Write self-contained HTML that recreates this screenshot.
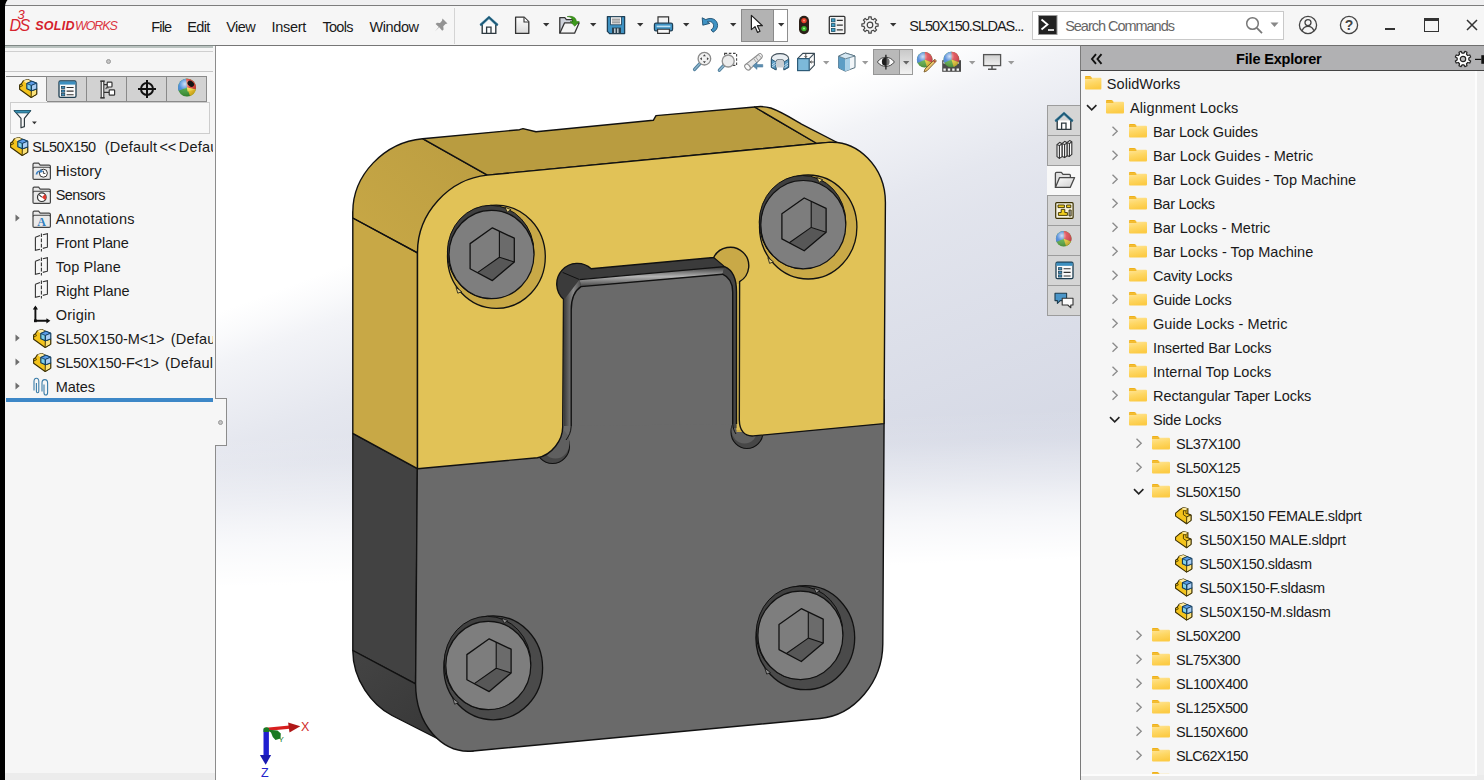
<!DOCTYPE html>
<html><head><meta charset="utf-8"><title>SOLIDWORKS</title>
<style>
*{box-sizing:border-box;margin:0;padding:0}
html,body{width:1484px;height:780px;overflow:hidden;background:#f5f5f5;font-family:"Liberation Sans",sans-serif;font-size:14.5px;color:#1a1a1a}
#app{position:relative;width:1484px;height:780px;overflow:hidden;background:#f5f5f5}
.abs{position:absolute}
.fn,.fm{font:14.5px "Liberation Sans",sans-serif;white-space:pre}
.fb{font:bold 14.5px "Liberation Sans",sans-serif;white-space:pre}
.fsb{font:italic bold 12.5px "Liberation Sans",sans-serif;white-space:pre}
.fsw{font:italic 12.5px "Liberation Sans",sans-serif;white-space:pre}
.t{position:absolute;white-space:pre;line-height:18px;height:18px}
svg{position:absolute;overflow:visible}
</style></head><body><div id="app">
<svg width="0" height="0" style="position:absolute"><defs>
<linearGradient id="fg" x1="0" y1="0" x2="0.300" y2="1"><stop offset="0" stop-color="#ffe59a"/><stop offset="0.500" stop-color="#fed867"/><stop offset="1" stop-color="#fccb45"/></linearGradient>
<g id="ic_folder"><path d="M0 0.900Q0 0 0.900 0H5.400Q6 0 6.400 0.500L7.600 2H0Z" fill="#efb11a"/><path d="M0 1.800H17Q18 1.800 18 2.800V12.600Q18 13.500 17 13.500H1Q0 13.500 0 12.600Z" fill="url(#fg)"/><path d="M0 1.800H7.400V3H0Z" fill="#f3bb2c"/></g>
<g id="ic_gear"><path d="M15.06 7.67L17.11 7.78L17.11 10.22L15.06 10.33L14.22 12.34L15.60 13.87L13.87 15.60L12.34 14.22L10.33 15.06L10.22 17.11L7.78 17.11L7.67 15.06L5.66 14.22L4.13 15.60L2.40 13.87L3.78 12.34L2.94 10.33L0.89 10.22L0.89 7.78L2.94 7.67L3.78 5.66L2.40 4.13L4.13 2.40L5.66 3.78L7.67 2.94L7.78 0.89L10.22 0.89L10.33 2.94L12.34 3.78L13.87 2.40L15.60 4.13L14.22 5.66Z" fill="none" stroke="#444" stroke-width="1.2" stroke-linejoin="round"/><circle cx="9" cy="9" r="2.800" fill="none" stroke="#444" stroke-width="1.200"/></g>
<g id="ic_ball"><circle cx="9.700" cy="8.800" r="7.800" fill="#5aa845"/><path d="M9.700 8.800L9.700 1A7.800 7.800 0 0 1 17 11.600Z" fill="#dd4a52"/><path d="M9.700 8.800L2.600 12A7.800 7.800 0 0 1 9.700 1Z" fill="#4a86d8"/><path d="M9.700 8.800L17 11.600A7.800 7.800 0 0 1 12 16.300Z" fill="#e8c83a"/><circle cx="9.700" cy="8.800" r="7.800" fill="url(#gball)"/></g>
<radialGradient id="gball" cx="0.380" cy="0.300" r="0.700"><stop offset="0" stop-color="#fff" stop-opacity="0.750"/><stop offset="0.450" stop-color="#fff" stop-opacity="0.100"/><stop offset="1" stop-color="#000" stop-opacity="0.180"/></radialGradient>
<g id="ic_asm"><path d="M0.600 5.800L2.400 4.600L4.200 1.700L8.600 0.500L12.400 2.400L17.200 9.600V14.800L11.800 18L0.600 10Z" fill="#f4c41c" stroke="#3a2e00" stroke-width="1.100" stroke-linejoin="round"/><path d="M4.200 1.700L8.600 0.500L12.400 2.400L7.600 4.600Z" fill="#fde9a0"/><path d="M12 11.400L17.200 9.600V14.800L11.800 18Z" fill="#fbe27a" stroke="#3a2e00" stroke-width="0.900" stroke-linejoin="round"/><path d="M2.400 4.600L3.400 6.600L0.900 7.600" fill="none" stroke="#3a2e00" stroke-width="0.800"/><path d="M7.600 4.400L12.500 2.200L17.200 4.100V9.600L12 11.500L7.600 9.400Z" fill="#7fd0ea" stroke="#0f3a5a" stroke-width="1.100" stroke-linejoin="round"/><path d="M7.600 4.400L12.500 2.200L17.200 4.100L12 6.300Z" fill="#5b9be6" stroke="#0f3a5a" stroke-width="0.800" stroke-linejoin="round"/><path d="M12 6.300L17.200 4.100V9.600L12 11.500Z" fill="#a9cdf3" stroke="#0f3a5a" stroke-width="0.800" stroke-linejoin="round"/><path d="M12 6.300V11.500" stroke="#0f3a5a" stroke-width="1.100"/></g>
<g id="ic_prt"><path d="M0.600 6.800L4.600 3.400L8.800 1L13.200 2.200V7.400L16.400 8.800V14.200L11.800 17.600L0.600 9.800Z" fill="#f4c41c" stroke="#3a2e00" stroke-width="1.100" stroke-linejoin="round"/><path d="M8.800 1L13.200 2.200L11 4.200L6.800 2.600Z" fill="#fde9a0"/><path d="M8.600 4.200V8.400L12 10.600L16.400 8.800" fill="none" stroke="#3a2e00" stroke-width="0.900"/><path d="M8.600 4.200L11.200 4.400L13.200 2.200" fill="none" stroke="#3a2e00" stroke-width="0.800"/><path d="M12 10.600L16.400 8.800V14.200L11.800 17.600Z" fill="#fbe27a" stroke="#3a2e00" stroke-width="0.900" stroke-linejoin="round"/><path d="M11.200 4.400V7.200L13.200 7.400" fill="none" stroke="#3a2e00" stroke-width="0.800"/></g>
<g id="ic_tri"><path d="M0.500 0.500L4.700 4L0.500 7.500Z" fill="#6e6e6e"/></g>
<g id="ic_plane"><path d="M1.400 4.200L6 2.600M8.800 1.800L13.400 0.800V14.200L8.800 15.400M6 16.200L1.400 17.400V4.200" fill="none" stroke="#333" stroke-width="1.100"/><path d="M7.400 0.400V18.600" stroke="#333" stroke-width="1.100" stroke-dasharray="3.600 1.600"/></g>
<g id="ic_tfolder"><path d="M1 16.200V2.400Q1 1.200 2.200 1.200H6.600L8.200 3.200H17Q18.400 3.200 18.400 4.600V16.200Q18.400 17.400 17.200 17.400H2.200Q1 17.400 1 16.200Z" fill="#eaeaea" stroke="#444" stroke-width="1.200" stroke-linejoin="round"/><path d="M1.200 6.400Q1.200 5.200 2.400 5.200H17.200Q18.200 5.200 18.200 6.400" fill="none" stroke="#444" stroke-width="1.100"/></g>
</defs></svg>
<!-- top strip + title bar -->
<div class="abs" style="left:0;top:0;width:1484px;height:5px;background:#f0f0f1"></div>
<div class="abs" style="left:5px;top:5px;width:1479px;height:1px;background:#7d7d7d"></div>
<div class="abs" id="titlebar" style="left:5px;top:6px;width:1479px;height:39px;background:#f6f6f6"></div>
<!-- logo -->
<div class="t" style="left:17.500px;top:9px;font:italic 13px 'Liberation Sans',sans-serif;color:#d6232f;line-height:12px;height:12px">3</div>
<div class="t" style="left:9.500px;top:17.500px;font:italic 16px 'Liberation Sans',sans-serif;color:#d6232f;line-height:16px;height:16px;letter-spacing:-1.600px">DS</div>
<div class="t" style="left:35.200px;top:16.500px;color:#d4202c;line-height:16px;height:16px"><span class="fsb" style="letter-spacing:0.279px">SOLID</span></div>
<div class="t" style="left:75px;top:16.500px;color:#dc3540;line-height:16px;height:16px"><span class="fsw" style="letter-spacing:-1.107px">WORKS</span></div>
<!-- menus -->
<div class="t" style="left:151.3px;top:18px"><span class="fm" style="letter-spacing:-0.869px">File</span></div>
<div class="t" style="left:187.3px;top:18px"><span class="fm" style="letter-spacing:-0.650px">Edit</span></div>
<div class="t" style="left:226.2px;top:18px"><span class="fm" style="letter-spacing:-0.568px">View</span></div>
<div class="t" style="left:271.6px;top:18px"><span class="fm" style="letter-spacing:-0.311px">Insert</span></div>
<div class="t" style="left:322.4px;top:18px"><span class="fm" style="letter-spacing:-0.712px">Tools</span></div>
<div class="t" style="left:369.4px;top:18px"><span class="fm" style="letter-spacing:-0.380px">Window</span></div>
<!-- pin -->
<svg style="left:433px;top:17px" width="16" height="16" viewBox="0 0 16 16"><path d="M9.5 1.5l5 5-2 .6-2.2 2.2.3 3.2-1.4 1.2-3-3.4-4.4 4.2 4-4.6L2.6 7l1.4-1.2 3 .2 2-2.2z" fill="#939393"/></svg>
<div class="abs" style="left:454px;top:8px;width:1px;height:36px;background:#d4d4d4"></div>
<!-- home -->
<svg style="left:479px;top:15px" width="20" height="20" viewBox="0 0 20 20"><path d="M3.2 9.5V18.4H16.8V9.5" fill="#fdfdfd" stroke="#2f3a40" stroke-width="1.4"/><path d="M7.6 18.4V12.2H12V18.4" fill="none" stroke="#2f3a40" stroke-width="1.3"/><path d="M1.4 10.2L10 2.4L18.6 10.2" fill="none" stroke="#2a6f8f" stroke-width="2.6" stroke-linejoin="miter"/><path d="M1.2 10.6L10 2.2L18.8 10.6" fill="none" stroke="#173d50" stroke-width="0.6"/></svg>
<!-- new -->
<svg style="left:514px;top:15px" width="17" height="20" viewBox="0 0 17 20"><defs><linearGradient id="gnew" x1="0" y1="0" x2="0" y2="1"><stop offset="0" stop-color="#fff"/><stop offset="1" stop-color="#d9d9d9"/></linearGradient></defs><path d="M1.6 2.2h8.6l4.6 4.6v11.6H1.6z" fill="url(#gnew)" stroke="#333" stroke-width="1.3" stroke-linejoin="round"/><path d="M10 2.4v4.6h4.6" fill="#fff" stroke="#333" stroke-width="1.1"/></svg>
<svg style="left:542.5px;top:23px" width="7" height="4"><path d="M0 0h6.4l-3.2 3.4z" fill="#333"/></svg>
<!-- open -->
<svg style="left:558px;top:14px" width="23" height="21" viewBox="0 0 23 21"><path d="M1.8 19.2V3.6h5l1.6 2h6.2v3" fill="#cfd3dc" stroke="#333" stroke-width="1.3" stroke-linejoin="round"/><path d="M1.8 19.2L6.6 8.8h14.6l-4.6 10.4z" fill="#f4f4f4" stroke="#333" stroke-width="1.3" stroke-linejoin="round"/><path d="M9.2 2.6c4 .2 5.4 2.4 5.6 5h-2.6l4.6 4.6 4.4-4.6h-2.8c-.2-3.6-3.2-6.200-9.200-5z" fill="#3d9a1c" stroke="#2b7410" stroke-width="0.6"/></svg>
<svg style="left:589.8px;top:23px" width="7" height="4"><path d="M0 0h6.4l-3.2 3.4z" fill="#333"/></svg>
<!-- save -->
<svg style="left:606px;top:15px" width="20" height="20" viewBox="0 0 20 20"><path d="M1.4 1.6h17.2v17h-15l-2.200-2.200z" fill="#3f93c4" stroke="#1f3f55" stroke-width="1.3" stroke-linejoin="round"/><rect x="4.600" y="1.800" width="10.800" height="8" fill="#f2f2f2" stroke="#1f3f55" stroke-width="0.8"/><path d="M6 4.200h8M6 6h8M6 7.800h8" stroke="#666" stroke-width="0.8"/><rect x="6" y="12.600" width="9" height="6" fill="#2a3f4c"/><rect x="8" y="13.400" width="1.600" height="4.600" fill="#b8c4cc"/><rect x="11" y="13.400" width="1.600" height="4.600" fill="#b8c4cc"/></svg>
<svg style="left:636.6px;top:23px" width="7" height="4"><path d="M0 0h6.4l-3.2 3.4z" fill="#333"/></svg>
<!-- print -->
<svg style="left:653px;top:15px" width="21" height="20" viewBox="0 0 21 20"><path d="M5 8.600V1.800h10.600v6.800" fill="#f4f4f4" stroke="#333" stroke-width="1.200"/><rect x="1.400" y="8.200" width="18.200" height="7.600" rx="1.600" fill="#3f93c4" stroke="#1f3f55" stroke-width="1.200"/><rect x="3.600" y="10.600" width="13.800" height="1.600" fill="#bfe0f2"/><path d="M4.600 14.200v4.200h11.800v-4.200z" fill="#f8f8f8" stroke="#333" stroke-width="1.100"/></svg>
<svg style="left:683.4px;top:23px" width="7" height="4"><path d="M0 0h6.4l-3.2 3.4z" fill="#333"/></svg>
<!-- undo -->
<svg style="left:700px;top:15px" width="20" height="20" viewBox="0 0 20 20"><path d="M2.200 2.800l.6 7.400 7-1.800-2.600-1.600c3-1.200 6.400.8 6.400 4 0 1.800-1 3.200-2.600 4l2 2.400c2.800-1.400 4.600-3.800 4.600-6.800 0-5.600-6-8.800-11.800-5.800z" fill="#3f93c4" stroke="#1f4f70" stroke-width="0.900" stroke-linejoin="round"/></svg>
<svg style="left:730.400px;top:23px" width="7" height="4"><path d="M0 0h6.4l-3.2 3.4z" fill="#333"/></svg>
<!-- select -->
<div class="abs" style="left:741px;top:9px;width:47px;height:33px;background:#fff;border:1px solid #8e8e8e"></div>
<div class="abs" style="left:741px;top:9px;width:33px;height:33px;background:#b3b3b3;border:1px solid #8a8a8a"></div>
<svg style="left:750px;top:14px" width="15" height="20" viewBox="0 0 15 20"><path d="M1.400 1.400V15.600l3.600-3 2.600 5.800 2.400-1.100-2.600-5.600h5z" fill="#fff" stroke="#222" stroke-width="1.200" stroke-linejoin="round"/></svg>
<svg style="left:777.700px;top:23px" width="7" height="4"><path d="M0 0h6.4l-3.2 3.4z" fill="#333"/></svg>
<!-- traffic light -->
<svg style="left:798px;top:15px" width="12" height="20" viewBox="0 0 12 20"><rect x="1" y="0.800" width="10" height="18.400" rx="5" fill="#2b2018"/><circle cx="6" cy="5.600" r="2.700" fill="#e8402a"/><circle cx="6" cy="5.600" r="1" fill="#ff9a80"/><circle cx="6" cy="13.600" r="2.700" fill="#36b428"/><circle cx="6" cy="13.600" r="1" fill="#a8f59a"/></svg>
<!-- options list -->
<svg style="left:828px;top:15px" width="18" height="20" viewBox="0 0 18 20"><rect x="1.300" y="1.300" width="15.600" height="17.400" rx="1" fill="#f4f4f4" stroke="#333" stroke-width="1.300"/><rect x="3.400" y="3.800" width="3.600" height="3" fill="#3fa0c8" stroke="#1d4f66" stroke-width="0.800"/><rect x="3.400" y="8.600" width="3.600" height="3" fill="#3fa0c8" stroke="#1d4f66" stroke-width="0.800"/><rect x="3.400" y="13.400" width="3.600" height="3" fill="#3fa0c8" stroke="#1d4f66" stroke-width="0.800"/><path d="M8.800 5.300h6M8.800 10.100h6M8.800 14.900h6" stroke="#333" stroke-width="1.200"/></svg>
<!-- gear -->
<svg style="left:861px;top:16px" width="18" height="18" viewBox="0 0 18 18"><use href="#ic_gear"/></svg>
<svg style="left:890.400px;top:23px" width="7" height="4"><path d="M0 0h6.4l-3.2 3.4z" fill="#333"/></svg>

<!-- doc title -->
<div class="t" style="left:909.3px;top:16.6px"><span class="fm" style="letter-spacing:-1.024px">SL50X150.SLDAS...</span></div>
<!-- search -->
<div class="abs" style="left:1032px;top:11px;width:252px;height:29px;background:#fff;border:1px solid #c9c9c9"></div>
<svg style="left:1038px;top:15px" width="20" height="20" viewBox="0 0 20 20"><rect x="0.5" y="0.5" width="18.5" height="19" fill="#222" stroke="#999"/><path d="M3.5 4.5l6 5-6 5" fill="none" stroke="#fff" stroke-width="1.8"/><path d="M10 15h6" stroke="#fff" stroke-width="1.6"/></svg>
<div class="t" style="left:1065.2px;top:16.6px;color:#666"><span class="fm" style="letter-spacing:-1.027px">Search Commands</span></div>
<svg style="left:1245px;top:16px" width="20" height="20" viewBox="0 0 20 20"><circle cx="7.5" cy="7.5" r="5.8" fill="none" stroke="#777" stroke-width="1.5"/><path d="M11.8 11.8l5.2 5.4" stroke="#777" stroke-width="1.8"/></svg>
<svg style="left:1270px;top:22px" width="10" height="6"><path d="M0.5 0.5h8l-4 4.5z" fill="#888"/></svg>
<!-- user / help / window buttons -->
<svg style="left:1298px;top:15px" width="20" height="20" viewBox="0 0 20 20"><circle cx="10" cy="10" r="8.6" fill="none" stroke="#444" stroke-width="1.3"/><circle cx="10" cy="7.6" r="3" fill="none" stroke="#444" stroke-width="1.3"/><path d="M4.2 15.8c1-3.4 3.4-4.4 5.8-4.4s4.8 1 5.8 4.4" fill="none" stroke="#444" stroke-width="1.3"/></svg>
<svg style="left:1339px;top:15px" width="20" height="20" viewBox="0 0 20 20"><circle cx="10" cy="10" r="8.6" fill="none" stroke="#444" stroke-width="1.3"/><text x="10" y="15" text-anchor="middle" font-family="Liberation Sans, sans-serif" font-weight="bold" font-size="14" fill="#444">?</text></svg>
<div class="abs" style="left:1385px;top:28px;width:10px;height:2px;background:#333"></div>
<div class="abs" style="left:1424px;top:18px;width:15px;height:14px;border:1px solid #333;border-top-width:3px"></div>
<svg style="left:1466px;top:19px" width="12" height="12"><path d="M1 1l10 10M11 1L1 11" stroke="#333" stroke-width="1.5"/></svg>
<!-- title bottom borders -->
<div class="abs" style="left:5px;top:45px;width:210px;height:1px;background:#808886"></div>
<div class="abs" style="left:215px;top:45px;width:1269px;height:1px;background:#767676"></div>
<!-- LEFT PANEL -->
<div class="abs" id="leftpanel" style="left:5px;top:46px;width:210px;height:734px;background:#f6f6f6"></div>
<div class="abs" style="left:5px;top:46px;width:208px;height:2px;background:#bac3c0"></div>
<div class="abs" style="left:5px;top:51px;width:208px;height:1px;background:#cfcfcf"></div>
<div class="abs" style="left:106px;top:58.5px;width:5px;height:5px;border-radius:50%;background:#c4c4c4;border:1px solid #999"></div>
<div class="abs" style="left:5px;top:71px;width:208px;height:1px;background:#c6c6c6"></div>
<!-- tabs -->
<div class="abs" style="left:6px;top:76px;width:41px;height:1px;background:#858585"></div>
<div class="abs" style="left:46px;top:76px;width:161px;height:26px;background:#d2d2d2;border:1px solid #8a8a8a"></div>
<div class="abs" style="left:86px;top:76px;width:1px;height:26px;background:#8a8a8a"></div>
<div class="abs" style="left:126px;top:76px;width:1px;height:26px;background:#8a8a8a"></div>
<div class="abs" style="left:166px;top:76px;width:1px;height:26px;background:#8a8a8a"></div>
<div class="abs" style="left:5px;top:101px;width:42px;height:1px;background:#f6f6f6"></div>
<svg style="left:18.500px;top:79px" width="18.500" height="18.500" viewBox="0 0 18 18"><use href="#ic_asm"/></svg>
<svg style="left:57.500px;top:79.500px" width="19" height="18" viewBox="0 0 19 18"><rect x="1" y="1" width="17" height="16.400" rx="1.400" fill="#fafafa" stroke="#1d3d50" stroke-width="1.300"/><path d="M1.400 1.400h16.200v3.200H1.400z" fill="#3c8fc0"/><rect x="3.400" y="6.400" width="3.400" height="2.200" fill="#3c8fc0" stroke="#1d3d50" stroke-width="0.700"/><rect x="3.400" y="10" width="3.400" height="2.200" fill="#3c8fc0" stroke="#1d3d50" stroke-width="0.700"/><rect x="3.400" y="13.600" width="3.400" height="2.200" fill="#3c8fc0" stroke="#1d3d50" stroke-width="0.700"/><path d="M8.600 7.500h7M8.600 11.100h7M8.600 14.700h7" stroke="#333" stroke-width="1.100"/></svg>
<svg style="left:98.500px;top:79.500px" width="17" height="19" viewBox="0 0 17 19"><path d="M2.200 1.200h2.600v16.600H2.200z" fill="#f6f6f6" stroke="#333" stroke-width="1.100"/><path d="M5 4.600h3.400M5 12.400h5.400" stroke="#333" stroke-width="1.200"/><path d="M1.200 1.200h4.600M1.200 17.800h4.600" stroke="#333" stroke-width="1.200"/><rect x="8.200" y="2.200" width="4.800" height="4.800" rx="0.800" fill="#fff" stroke="#333" stroke-width="1.200"/><rect x="10.200" y="9.800" width="5.400" height="5.400" rx="0.800" fill="#fff" stroke="#333" stroke-width="1.200"/><path d="M7 9.200V7.800h2.600" fill="none" stroke="#333" stroke-width="1"/></svg>
<svg style="left:137px;top:78.600px" width="20" height="20" viewBox="0 0 20 20"><circle cx="10" cy="10" r="6" fill="none" stroke="#111" stroke-width="2"/><path d="M10 1v18M1 10h18" stroke="#111" stroke-width="2"/></svg>
<svg style="left:177px;top:78px" width="20" height="20" viewBox="0 0 20 20"><circle cx="10" cy="9.600" r="9" fill="#3c9a35"/><path d="M10 9.600L1.600 12.800A9 9 0 0 1 9 0.700Z" fill="#3f86d8"/><path d="M10 9.600L9 0.700A9 9 0 0 1 18.800 11.400Z" fill="#e23b34"/><path d="M10 9.600L18.800 11.400A9 9 0 0 1 13 18Z" fill="#f2c420"/><path d="M10 9.600L18.800 11.400L10.500 13.400Z" fill="#f6d84a"/><circle cx="10" cy="9.600" r="9" fill="url(#gball)"/><ellipse cx="13.800" cy="5.800" rx="3.600" ry="2.700" transform="rotate(40 13.800 5.800)" fill="#151515"/></svg>

<!-- filter box -->
<div class="abs" style="left:10px;top:102px;width:200px;height:32px;background:#f8f8f8;border:1px solid #cdcdcd"></div>
<svg style="left:12.500px;top:109px" width="26" height="20" viewBox="0 0 26 20"><path d="M1.200 1.600H17.600L11.400 9.400V17.600L8 18.800V9.400Z" fill="#fafafa" stroke="#2f3a40" stroke-width="1.200" stroke-linejoin="round"/><path d="M1.200 1.600H17.600L15.800 3.900H3Z" fill="#3c96b8" stroke="#1f5a74" stroke-width="0.800"/><path d="M19 12.600h4.800l-2.400 2.600z" fill="#333"/></svg>

<!-- tree text -->
<div class="abs" style="left:5px;top:136px;width:208px;height:262px;overflow:hidden">
<div class="t" style="left:27.3px;top:2px"><span class="fn" style="letter-spacing:-0.567px">SL50X150</span></div>
<div class="t" style="left:99.8px;top:2px"><span class="fn" style="letter-spacing:0.215px">(Default</span></div>
<div class="t" style="left:154.6px;top:2px"><span class="fn" style="letter-spacing:-0.269px">&lt;&lt;</span></div>
<div class="t" style="left:173.8px;top:2px"><span class="fn" style="letter-spacing:0.221px">Default</span></div>
<div class="t" style="left:50.8px;top:26px"><span class="fn" style="letter-spacing:0.082px">History</span></div>
<div class="t" style="left:50.8px;top:50px"><span class="fn" style="letter-spacing:-0.600px">Sensors</span></div>
<div class="t" style="left:50.8px;top:74px"><span class="fn" style="letter-spacing:0.201px">Annotations</span></div>
<div class="t" style="left:50.8px;top:98px"><span class="fn" style="letter-spacing:-0.206px">Front Plane</span></div>
<div class="t" style="left:50.8px;top:122px"><span class="fn" style="letter-spacing:0.056px">Top Plane</span></div>
<div class="t" style="left:50.8px;top:146px"><span class="fn" style="letter-spacing:-0.124px">Right Plane</span></div>
<div class="t" style="left:50.8px;top:170px"><span class="fn" style="letter-spacing:0.185px">Origin</span></div>
<div class="t" style="left:50.8px;top:194px"><span class="fn" style="letter-spacing:-0.080px">SL50X150-M&lt;1&gt;</span></div>
<div class="t" style="left:165.8px;top:194px"><span class="fn" style="letter-spacing:0.215px">(Default</span></div>
<div class="t" style="left:50.8px;top:218px"><span class="fn" style="letter-spacing:-0.271px">SL50X150-F&lt;1&gt;</span></div>
<div class="t" style="left:160px;top:218px"><span class="fn" style="letter-spacing:0.215px">(Default</span></div>
<div class="t" style="left:50.8px;top:242px"><span class="fn" style="letter-spacing:-0.100px">Mates</span></div>
</div>
<svg style="left:31.500px;top:161.5px" width="19.500" height="18.500" viewBox="0 0 19.500 18.500"><use href="#ic_tfolder"/><circle cx="11.400" cy="11.200" r="4" fill="#fff" stroke="#333" stroke-width="1"/><path d="M11.400 8.800v2.600h2" fill="none" stroke="#333" stroke-width="0.900"/><path d="M3.600 12.600c.4-3 2.600-4.400 5-4l-.4-1.600 3.200 2.200-3 1.800-.2-1.200c-1.400-.2-2.600.8-2.800 2.800z" fill="#3b7fc0"/></svg>
<svg style="left:31.500px;top:185.8px" width="19.500" height="18.500" viewBox="0 0 19.500 18.500"><use href="#ic_tfolder"/><circle cx="9.800" cy="11.200" r="4.300" fill="#fff" stroke="#333" stroke-width="1.200"/><path d="M9.800 11.200L12.800 8.200A4.300 4.300 0 0 1 13 14.100Z" fill="#e0392e"/><path d="M9.800 11.200L7 8.600" stroke="#333" stroke-width="1.100"/></svg>
<svg style="left:31.500px;top:209.6px" width="19.500" height="18.500" viewBox="0 0 19.500 18.500"><use href="#ic_tfolder"/><text x="9.700" y="15.600" text-anchor="middle" font-family="Liberation Serif, serif" font-weight="bold" font-size="12" fill="#2f7fc0">A</text></svg>
<svg style="left:9.500px;top:137px" width="18.500" height="18.500" viewBox="0 0 18 18"><use href="#ic_asm"/></svg>
<svg style="left:32.800px;top:329px" width="18.500" height="18.500" viewBox="0 0 18 18"><use href="#ic_asm"/></svg>
<svg style="left:32.800px;top:353px" width="18.500" height="18.500" viewBox="0 0 18 18"><use href="#ic_asm"/></svg>
<svg style="left:14.800px;top:214.2px" width="6" height="8" viewBox="0 0 6 8"><use href="#ic_tri"/></svg>
<svg style="left:14.800px;top:334.2px" width="6" height="8" viewBox="0 0 6 8"><use href="#ic_tri"/></svg>
<svg style="left:14.800px;top:358.2px" width="6" height="8" viewBox="0 0 6 8"><use href="#ic_tri"/></svg>
<svg style="left:14.800px;top:382.2px" width="6" height="8" viewBox="0 0 6 8"><use href="#ic_tri"/></svg>
<svg style="left:34px;top:232.6px" width="15" height="19" viewBox="0 0 15 19"><use href="#ic_plane"/></svg>
<svg style="left:34px;top:256.6px" width="15" height="19" viewBox="0 0 15 19"><use href="#ic_plane"/></svg>
<svg style="left:34px;top:280.4px" width="15" height="19" viewBox="0 0 15 19"><use href="#ic_plane"/></svg>
<svg style="left:32px;top:304.500px" width="19" height="19" viewBox="0 0 19 19"><path d="M3.400 2V15.800H16" fill="none" stroke="#111" stroke-width="1.900"/><path d="M3.400 0.400L0.800 4.400H6ZM18.400 15.800L14.400 13.200V18.400Z" fill="#111"/><rect x="2" y="14.400" width="2.800" height="2.800" fill="#111"/></svg>
<svg style="left:32px;top:376.500px" width="18" height="19" viewBox="0 0 18 19"><path d="M2 13.400V4.600Q2 1.200 4.400 1.200Q6.800 1.200 6.800 4.600V14.200Q6.800 15.800 5.600 15.800Q4.400 15.800 4.400 14.200V6" fill="none" stroke="#3a7ca8" stroke-width="1.100"/><path d="M10 14.600V6Q10 2.600 12.800 2.600Q15.600 2.600 15.600 6V15.400Q15.600 18 13.800 18Q12 18 12 15.400V7.400" fill="none" stroke="#3a7ca8" stroke-width="1.100"/></svg>

<div class="abs" style="left:6px;top:398px;width:207px;height:4px;background:#3d87c7"></div>
<!-- bottom strip -->
<div class="abs" style="left:5px;top:773px;width:210px;height:7px;background:#ececec"></div>
<!-- right border of left panel -->
<div class="abs" style="left:215px;top:46px;width:1px;height:734px;background:#8c8c8c"></div>
<!-- VIEWPORT -->
<div class="abs" id="viewport" style="left:216px;top:46px;width:864px;height:734px;background:#fff"></div>
<div class="abs" style="left:216px;top:46px;width:864px;height:734px;background:linear-gradient(159.5deg,rgba(183,189,210,0) 250px,rgba(183,189,210,0.08) 275px,rgba(183,189,210,0.18) 300px,rgba(183,189,210,0.27) 340px,rgba(183,189,210,0.36) 380px,rgba(183,189,210,0.41) 420px,rgba(183,189,210,0.47) 500px,rgba(183,189,210,0.56) 634px,rgba(183,189,210,0.62) 800px)"></div>
<div class="abs" style="left:216px;top:46px;width:864px;height:734px;background:linear-gradient(178.1deg,rgba(255,255,255,0.00) 390px,rgba(255,255,255,0.10) 420px,rgba(255,255,255,0.23) 434px,rgba(255,255,255,0.45) 460px,rgba(255,255,255,0.64) 479px,rgba(255,255,255,0.80) 500px,rgba(255,255,255,0.90) 520px,rgba(255,255,255,1.00) 541px)"></div>
<svg id="model" style="left:0;top:0" width="1484" height="780" viewBox="0 0 1484 780">
<defs><linearGradient id="gfl" x1="0" y1="0" x2="1" y2="1"><stop offset="0" stop-color="#444"/><stop offset="1" stop-color="#343434"/></linearGradient><linearGradient id="gch" x1="0" y1="0" x2="0" y2="1"><stop offset="0" stop-color="#333"/><stop offset="0.5" stop-color="#b4b4b4"/><stop offset="1" stop-color="#444"/></linearGradient><linearGradient id="gcl" x1="0" y1="0" x2="1" y2="0"><stop offset="0" stop-color="#3a3a3a"/><stop offset="0.55" stop-color="#8a8a8a"/><stop offset="1" stop-color="#4a4a4a"/></linearGradient><linearGradient id="gyf" x1="1" y1="0" x2="0" y2="1"><stop offset="0" stop-color="#bb9d41"/><stop offset="1" stop-color="#c8a846"/></linearGradient></defs>
<polygon points="352.8,433.3 417.5,468.7 415.6,683.8 352.8,650.5" fill="#424242" stroke="#111" stroke-width="1.4" stroke-linejoin="round"/>
<path d="M352.8 650.5C352.8 680 372 705 392 715.5L452 746L473 751L440 720L415.6 683.8Z" fill="url(#gfl)" stroke="#111" stroke-width="1.4" stroke-linejoin="round"/>
<path d="M417.5 440L415.6 683.8C415.6 723.9 441.3 754 473 751L820 718.5C854.5 715.3 882.6 681.9 882.8 644L884.2 400L740 400L740 440Z" fill="#6a6a6a" stroke="#111" stroke-width="1.4" stroke-linejoin="round"/>
<rect x="556" y="262" width="190" height="200" fill="#6a6a6a"/>
<ellipse cx="552.5" cy="446" rx="17" ry="17.5" fill="#474747" stroke="#111" stroke-width="1.1"/>
<ellipse cx="555.5" cy="443" rx="14" ry="15.5" fill="#5f5f5f"/>
<ellipse cx="747" cy="432" rx="16" ry="16.5" fill="#474747" stroke="#111" stroke-width="1.1"/>
<ellipse cx="744.5" cy="429.5" rx="13" ry="14" fill="#5f5f5f"/>
<rect x="552" y="246" width="180" height="60" fill="#3b3b3b"/>
<path d="M710 244L713.7 257.5L724.6 266.6C733 270 736.5 280 736.5 292L736.5 432L742 432L750 290L750 244Z" fill="#c9a947"/>
<rect x="736.5" y="284" width="4" height="146" fill="#dcbe55"/>
<polygon points="352.8,212 352.8,433.3 417.5,468.7 417.5,250" fill="#c8a846" stroke="#111" stroke-width="1.4" stroke-linejoin="round"/>
<path d="M422.6 138.7C384 142.3 352.8 175.1 352.8 212L352.8 218L417.5 252.8L487.4 175.1Z" fill="url(#gyf)" stroke="#111" stroke-width="1.4" stroke-linejoin="round"/>
<polygon points="422.6,138.7 519.5,129.7 523,128.6 536,131.8 653.3,120.3 656,115.6 754.6,107 816.9,143.5 487.4,175.1" fill="#b99c40" stroke="#111" stroke-width="1.4" stroke-linejoin="round"/>
<path d="M754.6 107C760 106.2 766 106.6 770.8 108C782 112 792 118.5 801.5 124.2L846 147L830 142.5L816.9 143.5Z" fill="#caab49" stroke="#111" stroke-width="1.4" stroke-linejoin="round"/>
<path d="M487.4 175.1L828 142.4C857 139.8 885.5 166.5 885.4 202.7L884 423.6L753.3 435.9C744 436.5 739.5 430 739.3 420L739.6 281.7A18.5 18.5 0 1 0 713.7 257.5L591.2 268.7A20.6 20.6 0 1 0 563.5 299.2L562.7 427C562.7 440 552 455 537.4 457.7L417.5 468.7L417.5 252C417.5 213.3 448.8 178.9 487.4 175.1Z" fill="#e1c257" stroke="#111" stroke-width="1.4" stroke-linejoin="round"/>
<path d="M352.8 218L417.5 252.8" fill="none" stroke="#111" stroke-width="1.4" stroke-linejoin="round"/>
<path d="M579.6 279.6L562.6 272.4" fill="none" stroke="#111" stroke-width="1"/>
<path d="M713.7 257.5L724.6 266.6" fill="none" stroke="#111" stroke-width="1.1"/>
<polygon points="579.6,279.6 724.6,266.6 722.5,274.2 581,286.6" fill="url(#gch)"/>
<path d="M563.8 300L579.6 279.6L581 286.6C574 291 571.2 299 571.2 310L571.2 426L564 426Z" fill="url(#gcl)"/>
<path d="M724.6 266.6C733 270 736.5 280 736.5 292L736.5 428L732.7 428L732.7 292C732.7 283 729 277 722.5 274.2Z" fill="#454545"/>
<path d="M571.2 426L571.2 310C571.2 299 574 291 581 286.6L722.5 274.2C729 277 732.7 283 732.7 292L732.7 424" fill="#6a6a6a" stroke="#111" stroke-width="1.4" stroke-linejoin="round"/>
<path d="M579.6 279.6L724.6 266.6C733 270 736.5 280 736.5 292L736.5 424" fill="none" stroke="#111" stroke-width="1.4" stroke-linejoin="round"/>
<path d="M571.2 426C571 432 569 436 566 440M732.7 424C733 428 734 431 736 434" fill="none" stroke="#111" stroke-width="1"/>
<ellipse cx="496.4" cy="256.8" rx="48.9" ry="51.6" fill="#c9a947" stroke="#111" stroke-width="1.3"/>
<ellipse cx="490.7" cy="251.9" rx="43.3" ry="46.6" fill="#3f3f3f" stroke="#111" stroke-width="1"/>
<ellipse cx="491.5" cy="254.5" rx="42.5" ry="44.2" fill="#7e7e7e" stroke="#111" stroke-width="1.2"/>
<polygon points="504.9,207.2 510.9,209.6 507.4,212.2" fill="#e6cf7a" stroke="#111" stroke-width="0.8" stroke-linejoin="round"/>
<polygon points="456.0,287.4 461.6,291.6 457.8,293.2" fill="#e6cf7a" stroke="#111" stroke-width="0.8" stroke-linejoin="round"/>
<polygon points="470.1,243.6 492.4,227.8 514.3,238.2 514.3,262.0 492.4,280.6 470.1,268.7" fill="#7d7d7d"/>
<polygon points="499.4,231.1 514.3,238.2 514.3,262.0 499.4,257.2" fill="#6b6b6b"/>
<polygon points="499.4,257.2 514.3,262.0 492.4,280.6 477.5,272.6" fill="#575757"/>
<polygon points="470.1,243.6 492.4,227.8 514.3,238.2 514.3,262.0 492.4,280.6 470.1,268.7" fill="none" stroke="#111" stroke-width="1.3" stroke-linejoin="round"/>
<path d="M499.4 231.1L499.4 257.2L514.3 262.0M499.4 257.2L477.5 272.6" fill="none" stroke="#111" stroke-width="1.1"/>
<ellipse cx="808.2" cy="227" rx="48.7" ry="52" fill="#c9a947" stroke="#111" stroke-width="1.3"/>
<ellipse cx="802.5" cy="222.1" rx="43.3" ry="46.6" fill="#3f3f3f" stroke="#111" stroke-width="1"/>
<ellipse cx="803.3" cy="224.7" rx="42.5" ry="44.2" fill="#7e7e7e" stroke="#111" stroke-width="1.2"/>
<polygon points="816.7,177.4 822.7,179.8 819.2,182.4" fill="#e6cf7a" stroke="#111" stroke-width="0.8" stroke-linejoin="round"/>
<polygon points="767.8,257.6 773.4,261.8 769.6,263.4" fill="#e6cf7a" stroke="#111" stroke-width="0.8" stroke-linejoin="round"/>
<polygon points="781.9,213.8 804.2,198.0 826.1,208.4 826.1,232.2 804.2,250.8 781.9,238.9" fill="#7d7d7d"/>
<polygon points="811.2,201.3 826.1,208.4 826.1,232.2 811.2,227.4" fill="#6b6b6b"/>
<polygon points="811.2,227.4 826.1,232.2 804.2,250.8 789.3,242.8" fill="#575757"/>
<polygon points="781.9,213.8 804.2,198.0 826.1,208.4 826.1,232.2 804.2,250.8 781.9,238.9" fill="none" stroke="#111" stroke-width="1.3" stroke-linejoin="round"/>
<path d="M811.2 201.3L811.2 227.4L826.1 232.2M811.2 227.4L789.3 242.8" fill="none" stroke="#111" stroke-width="1.1"/>
<ellipse cx="493.2" cy="667.8" rx="49.4" ry="52" fill="#4a4a4a" stroke="#111" stroke-width="1.3"/>
<ellipse cx="487.5" cy="662.9" rx="43.3" ry="46.6" fill="#3f3f3f" stroke="#111" stroke-width="1"/>
<ellipse cx="488.3" cy="665.5" rx="42.5" ry="44.2" fill="#7e7e7e" stroke="#111" stroke-width="1.2"/>
<polygon points="501.7,618.2 507.7,620.6 504.2,623.2" fill="#8c8c8c" stroke="#111" stroke-width="0.8" stroke-linejoin="round"/>
<polygon points="452.8,698.4 458.4,702.6 454.6,704.2" fill="#8c8c8c" stroke="#111" stroke-width="0.8" stroke-linejoin="round"/>
<polygon points="466.9,654.6 489.2,638.8 511.1,649.2 511.1,673.0 489.2,691.6 466.9,679.7" fill="#7d7d7d"/>
<polygon points="496.2,642.1 511.1,649.2 511.1,673.0 496.2,668.2" fill="#6b6b6b"/>
<polygon points="496.2,668.2 511.1,673.0 489.2,691.6 474.3,683.6" fill="#575757"/>
<polygon points="466.9,654.6 489.2,638.8 511.1,649.2 511.1,673.0 489.2,691.6 466.9,679.7" fill="none" stroke="#111" stroke-width="1.3" stroke-linejoin="round"/>
<path d="M496.2 642.1L496.2 668.2L511.1 673.0M496.2 668.2L474.3 683.6" fill="none" stroke="#111" stroke-width="1.1"/>
<ellipse cx="805.3" cy="637.7" rx="49.4" ry="52" fill="#4a4a4a" stroke="#111" stroke-width="1.3"/>
<ellipse cx="799.6" cy="632.8" rx="43.3" ry="46.6" fill="#3f3f3f" stroke="#111" stroke-width="1"/>
<ellipse cx="800.4" cy="635.4" rx="42.5" ry="44.2" fill="#7e7e7e" stroke="#111" stroke-width="1.2"/>
<polygon points="813.8,588.1 819.8,590.5 816.3,593.1" fill="#8c8c8c" stroke="#111" stroke-width="0.8" stroke-linejoin="round"/>
<polygon points="764.9,668.3 770.5,672.5 766.7,674.1" fill="#8c8c8c" stroke="#111" stroke-width="0.8" stroke-linejoin="round"/>
<polygon points="779.0,624.5 801.3,608.7 823.2,619.1 823.2,642.9 801.3,661.5 779.0,649.6" fill="#7d7d7d"/>
<polygon points="808.3,612.0 823.2,619.1 823.2,642.9 808.3,638.1" fill="#6b6b6b"/>
<polygon points="808.3,638.1 823.2,642.9 801.3,661.5 786.4,653.5" fill="#575757"/>
<polygon points="779.0,624.5 801.3,608.7 823.2,619.1 823.2,642.9 801.3,661.5 779.0,649.6" fill="none" stroke="#111" stroke-width="1.3" stroke-linejoin="round"/>
<path d="M808.3 612.0L808.3 638.1L823.2 642.9M808.3 638.1L786.4 653.5" fill="none" stroke="#111" stroke-width="1.1"/>
</svg>
<!-- splitter tab -->
<div class="abs" style="left:215px;top:398px;width:12px;height:48px;background:#f6f6f6;border:1px solid #8c8c8c;border-left:none"></div>
<div class="abs" style="left:218px;top:419.5px;width:5px;height:5px;border-radius:50%;background:#c4c4c4;border:1px solid #999"></div>
<!-- HUD toolbar -->
<svg style="left:692px;top:51px" width="22" height="22" viewBox="0 0 22 22"><path d="M8.600 11.800L2.600 18.400" stroke="#4f7f9d" stroke-width="3.400" stroke-linecap="round"/><path d="M8.600 11.800L2.600 18.400" stroke="#8fb6cc" stroke-width="1.400" stroke-linecap="round"/><circle cx="12.400" cy="7.700" r="6.300" fill="#f1f1f1" stroke="#8a8a8a" stroke-width="1.300"/><path d="M12.400 3.200l1.500 2h-3zM12.400 12.200l1.500-2h-3zM7.900 7.700l2-1.500v3zM16.900 7.700l-2-1.500v3z" fill="#444"/></svg>
<svg style="left:717px;top:51px" width="22" height="22" viewBox="0 0 22 22"><rect x="7.600" y="2.400" width="12" height="12" fill="none" stroke="#444" stroke-width="1.100" stroke-dasharray="2.600 1.600"/><path d="M8 13.200L2.400 19.200" stroke="#4f7f9d" stroke-width="3.400" stroke-linecap="round"/><path d="M8 13.200L2.400 19.200" stroke="#8fb6cc" stroke-width="1.400" stroke-linecap="round"/><circle cx="11.200" cy="10" r="6" fill="#ececec" stroke="#909090" stroke-width="1.300"/></svg>
<svg style="left:744px;top:51px" width="22" height="22" viewBox="0 0 22 22"><path d="M1.400 13.600L14.600 3.200L17.800 6.800L5.600 18.600Z" fill="#e6e6e6" stroke="#8a8a8a" stroke-width="1.100" stroke-linejoin="round"/><path d="M14.600 3.200Q16 1.600 17.600 3.200Q19.200 5 17.800 6.800" fill="#f4f4f4" stroke="#8a8a8a" stroke-width="1"/><path d="M9.400 7.200L12.600 11.600M11.400 5.700L14.400 9.800" stroke="#9a9a9a" stroke-width="0.900"/><ellipse cx="3.500" cy="16.100" rx="2.300" ry="3.300" transform="rotate(-42 3.500 16.100)" fill="#fafafa" stroke="#8a8a8a" stroke-width="1"/><path d="M8.800 14.800L13 11.200V13.500H18.800V16.100H13V18.400Z" fill="#5b8db0" stroke="#4a7a9c" stroke-width="0.500"/></svg>
<svg style="left:770px;top:52px" width="20" height="20" viewBox="0 0 20 20"><path d="M1.400 6.400c0-2.800 3.800-4.800 8.600-4.800s8.600 2 8.600 4.800v8.800l-4.600 2.600v-7.400c0-1.600-1.800-2.800-4-2.800s-4 1.200-4 2.800v7.400l-4.600-2.600z" fill="#e9eef2" stroke="#44525c" stroke-width="1.100" stroke-linejoin="round"/><path d="M1.400 7.200L6 10v7.800l-4.600-2.600zM18.600 7.200L14 10v7.800l4.600-2.600z" fill="#5c9cc4" stroke="#2d5b78" stroke-width="1"/><path d="M6 10.400c0-1.600 1.800-2.800 4-2.800s4 1.200 4 2.800v5.200H6z" fill="#c9ced2"/><path d="M2 12.800l3.600-2.600M2 15l3.600-2.600M14.400 13.600l3.600-2.600M14.400 15.800l3.600-2.600" stroke="#cfe4f2" stroke-width="0.900"/></svg>
<svg style="left:796px;top:52px" width="20" height="20" viewBox="0 0 20 20"><path d="M1.600 6.600L6.800 1.400H18.400V13.200L13.200 18.600" fill="#fbfbfb" stroke="#3a4a55" stroke-width="1.100" stroke-linejoin="round"/><path d="M18.400 1.400L13.200 6.600" stroke="#3a4a55" stroke-width="1.100"/><rect x="1.600" y="6.600" width="11.600" height="12" fill="#7db9da" stroke="#2d5b78" stroke-width="1.200"/><path d="M9.800 2v3.400M8.600 4.200l1.200 1.400 1.200-1.400M17.800 10h-3.400M15.600 8.800l-1.400 1.200 1.400 1.200" stroke="#333" stroke-width="0.900" fill="none"/></svg>
<svg style="left:822.500px;top:60.500px" width="7" height="4"><path d="M0 0h6.400l-3.200 3.400z" fill="#9a9a9a"/></svg>
<svg style="left:837px;top:52px" width="20" height="20" viewBox="0 0 20 20"><path d="M1.600 4.200L8.400 1l9.600 3v11.600l-9.600 3.600L1.600 16z" fill="#f2f6f9" stroke="#55707f" stroke-width="1" stroke-linejoin="round"/><path d="M1.600 4.200L8.400 6.800V19.200L1.600 16z" fill="#5d9dc5"/><path d="M8.400 6.800l4.600-1.400v12.100L8.400 19.200z" fill="#a9d0e8"/><path d="M1.600 4.200L8.400 1l9.600 3-9.600 2.800z" fill="#d6e8f3" stroke="#55707f" stroke-width="0.800"/></svg>
<svg style="left:862.400px;top:60.500px" width="7" height="4"><path d="M0 0h6.400l-3.200 3.400z" fill="#9a9a9a"/></svg>
<!-- eye button -->
<div class="abs" style="left:873px;top:49px;width:40px;height:26px;background:linear-gradient(to bottom,#c9c9c9,#f2f2f2);border:1px solid #9a9a9a"></div>
<div class="abs" style="left:873px;top:49px;width:27px;height:26px;background:#b9b9b9;border:1px solid #959595"></div>
<svg style="left:876px;top:52px" width="20" height="20" viewBox="0 0 20 20"><path d="M1.400 10c2.400-3.400 5.200-4.700 8.400-4.700s6.200 1.300 8.600 4.700c-2.400 3.100-5.400 4.400-8.600 4.400S3.800 13.100 1.400 10z" fill="#fafafa" stroke="#444" stroke-width="1"/><circle cx="9.700" cy="9.700" r="3.900" fill="#707070"/><path d="M9.900 5.800a3.900 3.900 0 0 0 0 7.800z" fill="#1c1c1c"/><path d="M9.900 2.800V17.400" stroke="#1c1c1c" stroke-width="1.300"/></svg>
<svg style="left:902.500px;top:60.500px" width="7" height="4"><path d="M0 0h6.400l-3.200 3.400z" fill="#666"/></svg>
<!-- edit appearance -->
<svg style="left:915px;top:51px" width="22" height="22" viewBox="0 0 22 22"><use href="#ic_ball"/><path d="M19.800 8.200l1.600 1.800-9.400 9.800-3 1.200 1-3z" fill="#e9c46a" stroke="#7a5a2a" stroke-width="0.900" stroke-linejoin="round"/><path d="M18.600 9.400l1.600 1.800" stroke="#b04a3a" stroke-width="1.600"/></svg>
<!-- apply scene -->
<svg style="left:941px;top:51px" width="22" height="22" viewBox="0 0 22 22"><rect x="1.200" y="9.200" width="18.800" height="11.600" fill="#4a4a4a"/><path d="M2.400 10.400h2.400v2.200H2.400zM2.400 17.600h2.400v2.200H2.400zM6.800 17.600h2.400v2.200H6.800zM11.200 17.600h2.400v2.200h-2.400zM15.600 17.600H18v2.200h-2.400zM15.600 10.400H18v2.200h-2.400z" fill="#f4f4f4"/><g transform="translate(0.700 -0.300)"><use href="#ic_ball"/></g></svg>
<svg style="left:968.500px;top:60.500px" width="7" height="4"><path d="M0 0h6.400l-3.200 3.400z" fill="#9a9a9a"/></svg>
<!-- monitor -->
<svg style="left:982px;top:53px" width="20" height="18" viewBox="0 0 20 18"><defs><linearGradient id="gmon" x1="0" y1="0" x2="0" y2="1"><stop offset="0" stop-color="#cfcfcf"/><stop offset="1" stop-color="#f0f0f0"/></linearGradient></defs><rect x="1.600" y="1.600" width="17" height="11" fill="url(#gmon)" stroke="#555" stroke-width="1.300"/><path d="M10 12.800v3M6 16.200h8.400" stroke="#555" stroke-width="1.500"/></svg>
<svg style="left:1008.400px;top:60.500px" width="7" height="4"><path d="M0 0h6.400l-3.200 3.400z" fill="#9a9a9a"/></svg>

<svg style="left:250px;top:710px" width="70" height="70" viewBox="0 0 70 70">
<path d="M16.200 19.300L39.500 17.200" stroke="#d81f1f" stroke-width="3.200"/><path d="M38.100 12.600L50.300 16.200L39.500 22.400Z" fill="#b01818"/>
<path d="M16.200 19.600L21 22.500Q22 27 25.500 30L30.500 28.600L30.800 23.400L27.500 20.600Z" fill="#1a7a22"/>
<path d="M16.200 19.300V45" stroke="#1f1fd0" stroke-width="5.400"/><path d="M13.500 18.500Q16 16.400 19 18.200V22H13.500Z" fill="#1a7a22"/><path d="M9.900 44.900H21.100L15.700 54.800Z" fill="#1a1ab0"/>
<text x="51" y="20.600" font-family="Liberation Sans, sans-serif" font-size="12.500" fill="#d02a2a">X</text>
<text x="28.400" y="32" font-family="Liberation Sans, sans-serif" font-size="8" fill="#1a7a22">Y</text>
<text x="11" y="66.800" font-family="Liberation Sans, sans-serif" font-size="12.500" fill="#2222cc">Z</text>
</svg>

<!-- side tabs -->
<div class="abs" style="left:1047px;top:105px;width:34px;height:211px;background:#d5d5d5;border:1px solid #9c9c9c"></div>
<div class="abs" style="left:1047px;top:166px;width:34px;height:29px;background:#f8f8f8"></div>
<div class="abs" style="left:1047px;top:135px;width:33px;height:1px;background:#9c9c9c"></div>
<div class="abs" style="left:1047px;top:165px;width:33px;height:1px;background:#9c9c9c"></div>
<div class="abs" style="left:1047px;top:195px;width:33px;height:1px;background:#9c9c9c"></div>
<div class="abs" style="left:1047px;top:225px;width:33px;height:1px;background:#9c9c9c"></div>
<div class="abs" style="left:1047px;top:255px;width:33px;height:1px;background:#9c9c9c"></div>
<div class="abs" style="left:1047px;top:285px;width:33px;height:1px;background:#9c9c9c"></div>
<svg style="left:1054px;top:110.500px" width="20" height="20" viewBox="0 0 20 20"><path d="M3.200 9.500V18.400H16.800V9.500" fill="#fdfdfd" stroke="#2f3a40" stroke-width="1.400"/><path d="M7.600 18.400V12.200H12V18.400" fill="none" stroke="#2f3a40" stroke-width="1.300"/><path d="M1.400 10.200L10 2.400L18.600 10.200" fill="none" stroke="#2a6f8f" stroke-width="2.600"/><path d="M1.200 10.600L10 2.200L18.800 10.600" fill="none" stroke="#173d50" stroke-width="0.600"/></svg>
<svg style="left:1056px;top:139px" width="17" height="20" viewBox="0 0 17 20"><g fill="#fafafa" stroke="#2f2f2f" stroke-width="1.100" stroke-linejoin="round"><path d="M1 5.600L3.800 3.400L6.200 4.800V17.600L3.400 19.400L1 17.600Z"/><path d="M3.400 6.600V19.400M1 5.600L3.400 6.600L6.200 4.800"/><path d="M6.200 4.400L8.800 2.400L11.200 3.800V16.800L8.600 18.600L6.200 17.600Z"/><path d="M8.600 5.600V18.600M6.200 4.400L8.600 5.600L11.200 3.800"/><path d="M11.200 3.400L13.600 1.600L15.800 2.800V15.400L13.400 17.400L11.200 16.800Z"/><path d="M13.400 4.600V17.400M11.200 3.400L13.400 4.600L15.800 2.800"/></g></svg>
<svg style="left:1053.500px;top:171px" width="22" height="18" viewBox="0 0 22 18"><defs><linearGradient id="gof" x1="0" y1="0" x2="1" y2="1"><stop offset="0" stop-color="#fff"/><stop offset="1" stop-color="#cfcfcf"/></linearGradient></defs><path d="M1.400 16.400V2.600Q1.400 1.400 2.600 1.400H7.400L9 3.400H15.400Q16.400 3.400 16.400 4.400V6.600" fill="#e2e2e2" stroke="#4a4a4a" stroke-width="1.300" stroke-linejoin="round"/><path d="M1.400 16.400L5.600 6.600H20.600L16.200 16.400Z" fill="url(#gof)" stroke="#4a4a4a" stroke-width="1.300" stroke-linejoin="round"/></svg>
<svg style="left:1055px;top:202px" width="19" height="17" viewBox="0 0 19 17"><rect x="0.700" y="0.700" width="17.400" height="15.600" rx="1" fill="#f7f3e0" stroke="#3a3000" stroke-width="1.200"/><path d="M3 3h6.400v2.600H3zM11.600 3h4.200v2.600h-4.200zM6.200 7.400h3.600v3.200h2.600v2.800H3.400v-2.800h2.800z" fill="#f2cf1d" stroke="#3a3000" stroke-width="0.900"/><path d="M14 8h2.200v6H14z" fill="#9a9a9a" stroke="#3a3000" stroke-width="0.800"/></svg>
<svg style="left:1054.300px;top:230px" width="20" height="20" viewBox="0 0 20 20"><use href="#ic_ball"/></svg>
<svg style="left:1055px;top:260.500px" width="19" height="18.500" viewBox="0 0 19 18"><rect x="1" y="1" width="17" height="16.400" rx="1.400" fill="#fafafa" stroke="#1d3d50" stroke-width="1.300"/><path d="M1.400 1.400h16.200v3.200H1.400z" fill="#3c8fc0"/><rect x="3.400" y="6.400" width="3.400" height="2.200" fill="#3c8fc0" stroke="#1d3d50" stroke-width="0.700"/><rect x="3.400" y="10" width="3.400" height="2.200" fill="#3c8fc0" stroke="#1d3d50" stroke-width="0.700"/><rect x="3.400" y="13.600" width="3.400" height="2.200" fill="#3c8fc0" stroke="#1d3d50" stroke-width="0.700"/><path d="M8.600 7.500h7M8.600 11.100h7M8.600 14.700h7" stroke="#333" stroke-width="1.100"/></svg>
<svg style="left:1054px;top:292px" width="20" height="17" viewBox="0 0 20 17"><path d="M1 1.200H12.600V8.600H6.200L3.400 11.400V8.600H1Z" fill="#4a95c8" stroke="#1d3d50" stroke-width="1.100" stroke-linejoin="round"/><path d="M8.200 6.200H19V13H16.800V15.800L13.800 13H8.200Z" fill="#fbfbfb" stroke="#333" stroke-width="1.100" stroke-linejoin="round"/></svg>

<!-- RIGHT PANEL -->
<div class="abs" id="rightpanel" style="left:1080px;top:46px;width:404px;height:734px;background:#f6f6f6;border-left:1px solid #7a7a7a"></div>
<div class="abs" style="left:1080px;top:45px;width:404px;height:26px;background:#b1b1b3;border-top:1px solid #6e6e6e;border-bottom:1px solid #444;border-left:1px solid #7a7a7a"></div>
<div class="t" style="left:1236px;top:49.500px;color:#000"><span class="fb" style="letter-spacing:-0.173px">File Explorer</span></div>
<svg style="left:1090px;top:53px" width="14" height="12" viewBox="0 0 14 12"><path d="M6 1.2L2 6l4 4.8M11.5 1.2L7.5 6l4 4.8" fill="none" stroke="#111" stroke-width="1.9"/></svg>
<svg style="left:1454px;top:50px" width="18" height="18" viewBox="0 0 18 18"><path d="M14.83 9.92L16.65 10.96L15.80 13.02L13.77 12.47L12.47 13.77L13.02 15.80L10.96 16.65L9.92 14.83L8.08 14.83L7.04 16.65L4.98 15.80L5.53 13.77L4.23 12.47L2.20 13.02L1.35 10.96L3.17 9.92L3.17 8.08L1.35 7.04L2.20 4.98L4.23 5.53L5.53 4.23L4.98 2.20L7.04 1.35L8.08 3.17L9.92 3.17L10.96 1.35L13.02 2.20L12.47 4.23L13.77 5.53L15.80 4.98L16.65 7.04L14.83 8.08Z" fill="#fff" stroke="#222" stroke-width="1.200" stroke-linejoin="round"/><circle cx="9" cy="9" r="2.700" fill="#bdbdbd" stroke="#222" stroke-width="1.200"/></svg>
<svg style="left:1474px;top:54px" width="10" height="11" viewBox="0 0 10 11"><path d="M1 5.400H7.400" stroke="#111" stroke-width="1.200"/><path d="M7.300 1.200H10V9.800H7.300Z" fill="#111"/></svg>

<!-- scrollbar track -->
<div class="abs rp-inner" style="left:1475px;top:71px;width:2px;height:705px;background:#fdfdfd"></div>
<div class="abs" style="left:1477px;top:71px;width:7px;height:704px;background:#efefef"></div>
<div class="abs" style="left:1081px;top:775px;width:403px;height:5px;background:#ebebeb"></div>
<div class="abs" style="left:1081px;top:71px;width:394px;height:703px;overflow:hidden">
<svg style="left:3.7px;top:5.0px" width="16.4" height="14" viewBox="0 0 18 14" preserveAspectRatio="none"><use href="#ic_folder"/></svg>
<div class="t" style="left:25.8px;top:3.6px"><span class="fn" style="letter-spacing:0.054px">SolidWorks</span></div>
<svg style="left:5.3px;top:33.4px" width="12" height="8" viewBox="0 0 12 8"><path d="M1 1.100L5.700 5.800L10.400 1.100" fill="none" stroke="#222" stroke-width="1.600"/></svg>
<svg style="left:24.9px;top:29.0px" width="18" height="14" viewBox="0 0 18 14" preserveAspectRatio="none"><use href="#ic_folder"/></svg>
<div class="t" style="left:48.9px;top:27.6px"><span class="fn" style="letter-spacing:0.147px">Alignment Locks</span></div>
<svg style="left:30.4px;top:55.4px" width="8" height="11" viewBox="0 0 8 11"><path d="M1.500 0.800L6.200 5.300L1.500 9.800" fill="none" stroke="#8c8c8c" stroke-width="1.350"/></svg>
<svg style="left:48.0px;top:53.0px" width="18" height="14" viewBox="0 0 18 14" preserveAspectRatio="none"><use href="#ic_folder"/></svg>
<div class="t" style="left:72.0px;top:51.6px"><span class="fn" style="letter-spacing:-0.160px">Bar Lock Guides</span></div>
<svg style="left:30.4px;top:79.4px" width="8" height="11" viewBox="0 0 8 11"><path d="M1.500 0.800L6.200 5.300L1.500 9.800" fill="none" stroke="#8c8c8c" stroke-width="1.350"/></svg>
<svg style="left:48.0px;top:77.0px" width="18" height="14" viewBox="0 0 18 14" preserveAspectRatio="none"><use href="#ic_folder"/></svg>
<div class="t" style="left:72.0px;top:75.6px"><span class="fn" style="letter-spacing:0.031px">Bar Lock Guides - Metric</span></div>
<svg style="left:30.4px;top:103.4px" width="8" height="11" viewBox="0 0 8 11"><path d="M1.500 0.800L6.200 5.300L1.500 9.800" fill="none" stroke="#8c8c8c" stroke-width="1.350"/></svg>
<svg style="left:48.0px;top:101.0px" width="18" height="14" viewBox="0 0 18 14" preserveAspectRatio="none"><use href="#ic_folder"/></svg>
<div class="t" style="left:72.0px;top:99.6px"><span class="fn" style="letter-spacing:0.040px">Bar Lock Guides - Top Machine</span></div>
<svg style="left:30.4px;top:127.4px" width="8" height="11" viewBox="0 0 8 11"><path d="M1.500 0.800L6.200 5.300L1.500 9.800" fill="none" stroke="#8c8c8c" stroke-width="1.350"/></svg>
<svg style="left:48.0px;top:125.0px" width="18" height="14" viewBox="0 0 18 14" preserveAspectRatio="none"><use href="#ic_folder"/></svg>
<div class="t" style="left:72.0px;top:123.6px"><span class="fn" style="letter-spacing:-0.298px">Bar Locks</span></div>
<svg style="left:30.4px;top:151.4px" width="8" height="11" viewBox="0 0 8 11"><path d="M1.500 0.800L6.200 5.300L1.500 9.800" fill="none" stroke="#8c8c8c" stroke-width="1.350"/></svg>
<svg style="left:48.0px;top:149.0px" width="18" height="14" viewBox="0 0 18 14" preserveAspectRatio="none"><use href="#ic_folder"/></svg>
<div class="t" style="left:72.0px;top:147.6px"><span class="fn" style="letter-spacing:0.031px">Bar Locks - Metric</span></div>
<svg style="left:30.4px;top:175.4px" width="8" height="11" viewBox="0 0 8 11"><path d="M1.500 0.800L6.200 5.300L1.500 9.800" fill="none" stroke="#8c8c8c" stroke-width="1.350"/></svg>
<svg style="left:48.0px;top:173.0px" width="18" height="14" viewBox="0 0 18 14" preserveAspectRatio="none"><use href="#ic_folder"/></svg>
<div class="t" style="left:72.0px;top:171.6px"><span class="fn" style="letter-spacing:0.043px">Bar Locks - Top Machine</span></div>
<svg style="left:30.4px;top:199.4px" width="8" height="11" viewBox="0 0 8 11"><path d="M1.500 0.800L6.200 5.300L1.500 9.800" fill="none" stroke="#8c8c8c" stroke-width="1.350"/></svg>
<svg style="left:48.0px;top:197.0px" width="18" height="14" viewBox="0 0 18 14" preserveAspectRatio="none"><use href="#ic_folder"/></svg>
<div class="t" style="left:72.0px;top:195.6px"><span class="fn" style="letter-spacing:-0.234px">Cavity Locks</span></div>
<svg style="left:30.4px;top:223.4px" width="8" height="11" viewBox="0 0 8 11"><path d="M1.500 0.800L6.200 5.300L1.500 9.800" fill="none" stroke="#8c8c8c" stroke-width="1.350"/></svg>
<svg style="left:48.0px;top:221.0px" width="18" height="14" viewBox="0 0 18 14" preserveAspectRatio="none"><use href="#ic_folder"/></svg>
<div class="t" style="left:72.0px;top:219.6px"><span class="fn" style="letter-spacing:-0.192px">Guide Locks</span></div>
<svg style="left:30.4px;top:247.4px" width="8" height="11" viewBox="0 0 8 11"><path d="M1.500 0.800L6.200 5.300L1.500 9.800" fill="none" stroke="#8c8c8c" stroke-width="1.350"/></svg>
<svg style="left:48.0px;top:245.0px" width="18" height="14" viewBox="0 0 18 14" preserveAspectRatio="none"><use href="#ic_folder"/></svg>
<div class="t" style="left:72.0px;top:243.6px"><span class="fn" style="letter-spacing:0.077px">Guide Locks - Metric</span></div>
<svg style="left:30.4px;top:271.4px" width="8" height="11" viewBox="0 0 8 11"><path d="M1.500 0.800L6.200 5.300L1.500 9.800" fill="none" stroke="#8c8c8c" stroke-width="1.350"/></svg>
<svg style="left:48.0px;top:269.0px" width="18" height="14" viewBox="0 0 18 14" preserveAspectRatio="none"><use href="#ic_folder"/></svg>
<div class="t" style="left:72.0px;top:267.6px"><span class="fn" style="letter-spacing:-0.139px">Inserted Bar Locks</span></div>
<svg style="left:30.4px;top:295.4px" width="8" height="11" viewBox="0 0 8 11"><path d="M1.500 0.800L6.200 5.300L1.500 9.800" fill="none" stroke="#8c8c8c" stroke-width="1.350"/></svg>
<svg style="left:48.0px;top:293.0px" width="18" height="14" viewBox="0 0 18 14" preserveAspectRatio="none"><use href="#ic_folder"/></svg>
<div class="t" style="left:72.0px;top:291.6px"><span class="fn" style="letter-spacing:0.054px">Internal Top Locks</span></div>
<svg style="left:30.4px;top:319.4px" width="8" height="11" viewBox="0 0 8 11"><path d="M1.500 0.800L6.200 5.300L1.500 9.800" fill="none" stroke="#8c8c8c" stroke-width="1.350"/></svg>
<svg style="left:48.0px;top:317.0px" width="18" height="14" viewBox="0 0 18 14" preserveAspectRatio="none"><use href="#ic_folder"/></svg>
<div class="t" style="left:72.0px;top:315.6px"><span class="fn" style="letter-spacing:-0.080px">Rectangular Taper Locks</span></div>
<svg style="left:28.4px;top:345.4px" width="12" height="8" viewBox="0 0 12 8"><path d="M1 1.100L5.700 5.800L10.400 1.100" fill="none" stroke="#222" stroke-width="1.600"/></svg>
<svg style="left:48.0px;top:341.0px" width="18" height="14" viewBox="0 0 18 14" preserveAspectRatio="none"><use href="#ic_folder"/></svg>
<div class="t" style="left:72.0px;top:339.6px"><span class="fn" style="letter-spacing:-0.274px">Side Locks</span></div>
<svg style="left:53.5px;top:367.4px" width="8" height="11" viewBox="0 0 8 11"><path d="M1.500 0.800L6.200 5.300L1.500 9.800" fill="none" stroke="#8c8c8c" stroke-width="1.350"/></svg>
<svg style="left:71.1px;top:365.0px" width="18" height="14" viewBox="0 0 18 14" preserveAspectRatio="none"><use href="#ic_folder"/></svg>
<div class="t" style="left:95.1px;top:363.6px"><span class="fn" style="letter-spacing:-0.479px">SL37X100</span></div>
<svg style="left:53.5px;top:391.4px" width="8" height="11" viewBox="0 0 8 11"><path d="M1.500 0.800L6.200 5.300L1.500 9.800" fill="none" stroke="#8c8c8c" stroke-width="1.350"/></svg>
<svg style="left:71.1px;top:389.0px" width="18" height="14" viewBox="0 0 18 14" preserveAspectRatio="none"><use href="#ic_folder"/></svg>
<div class="t" style="left:95.1px;top:387.6px"><span class="fn" style="letter-spacing:-0.479px">SL50X125</span></div>
<svg style="left:51.5px;top:417.4px" width="12" height="8" viewBox="0 0 12 8"><path d="M1 1.100L5.700 5.800L10.400 1.100" fill="none" stroke="#222" stroke-width="1.600"/></svg>
<svg style="left:71.1px;top:413.0px" width="18" height="14" viewBox="0 0 18 14" preserveAspectRatio="none"><use href="#ic_folder"/></svg>
<div class="t" style="left:95.1px;top:411.6px"><span class="fn" style="letter-spacing:-0.479px">SL50X150</span></div>
<svg style="left:94.4px;top:434.8px" width="17.600" height="18.600" viewBox="0 0 18 18"><use href="#ic_prt"/></svg>
<div class="t" style="left:118.2px;top:435.6px"><span class="fn" style="letter-spacing:-0.321px">SL50X150 FEMALE.sldprt</span></div>
<svg style="left:94.4px;top:458.8px" width="17.600" height="18.600" viewBox="0 0 18 18"><use href="#ic_prt"/></svg>
<div class="t" style="left:118.2px;top:459.6px"><span class="fn" style="letter-spacing:-0.207px">SL50X150 MALE.sldprt</span></div>
<svg style="left:94.4px;top:482.8px" width="17.600" height="18.600" viewBox="0 0 18 18"><use href="#ic_asm"/></svg>
<div class="t" style="left:118.2px;top:483.6px"><span class="fn" style="letter-spacing:-0.346px">SL50X150.sldasm</span></div>
<svg style="left:94.4px;top:506.8px" width="17.600" height="18.600" viewBox="0 0 18 18"><use href="#ic_asm"/></svg>
<div class="t" style="left:118.2px;top:507.6px"><span class="fn" style="letter-spacing:-0.239px">SL50X150-F.sldasm</span></div>
<svg style="left:94.4px;top:530.8px" width="17.600" height="18.600" viewBox="0 0 18 18"><use href="#ic_asm"/></svg>
<div class="t" style="left:118.2px;top:531.6px"><span class="fn" style="letter-spacing:-0.182px">SL50X150-M.sldasm</span></div>
<svg style="left:53.5px;top:559.4px" width="8" height="11" viewBox="0 0 8 11"><path d="M1.500 0.800L6.200 5.300L1.500 9.800" fill="none" stroke="#8c8c8c" stroke-width="1.350"/></svg>
<svg style="left:71.1px;top:557.0px" width="18" height="14" viewBox="0 0 18 14" preserveAspectRatio="none"><use href="#ic_folder"/></svg>
<div class="t" style="left:95.1px;top:555.6px"><span class="fn" style="letter-spacing:-0.479px">SL50X200</span></div>
<svg style="left:53.5px;top:583.4px" width="8" height="11" viewBox="0 0 8 11"><path d="M1.500 0.800L6.200 5.300L1.500 9.800" fill="none" stroke="#8c8c8c" stroke-width="1.350"/></svg>
<svg style="left:71.1px;top:581.0px" width="18" height="14" viewBox="0 0 18 14" preserveAspectRatio="none"><use href="#ic_folder"/></svg>
<div class="t" style="left:95.1px;top:579.6px"><span class="fn" style="letter-spacing:-0.479px">SL75X300</span></div>
<svg style="left:53.5px;top:607.4px" width="8" height="11" viewBox="0 0 8 11"><path d="M1.500 0.800L6.200 5.300L1.500 9.800" fill="none" stroke="#8c8c8c" stroke-width="1.350"/></svg>
<svg style="left:71.1px;top:605.0px" width="18" height="14" viewBox="0 0 18 14" preserveAspectRatio="none"><use href="#ic_folder"/></svg>
<div class="t" style="left:95.1px;top:603.6px"><span class="fn" style="letter-spacing:-0.466px">SL100X400</span></div>
<svg style="left:53.5px;top:631.4px" width="8" height="11" viewBox="0 0 8 11"><path d="M1.500 0.800L6.200 5.300L1.500 9.800" fill="none" stroke="#8c8c8c" stroke-width="1.350"/></svg>
<svg style="left:71.1px;top:629.0px" width="18" height="14" viewBox="0 0 18 14" preserveAspectRatio="none"><use href="#ic_folder"/></svg>
<div class="t" style="left:95.1px;top:627.6px"><span class="fn" style="letter-spacing:-0.466px">SL125X500</span></div>
<svg style="left:53.5px;top:655.4px" width="8" height="11" viewBox="0 0 8 11"><path d="M1.500 0.800L6.200 5.300L1.500 9.800" fill="none" stroke="#8c8c8c" stroke-width="1.350"/></svg>
<svg style="left:71.1px;top:653.0px" width="18" height="14" viewBox="0 0 18 14" preserveAspectRatio="none"><use href="#ic_folder"/></svg>
<div class="t" style="left:95.1px;top:651.6px"><span class="fn" style="letter-spacing:-0.466px">SL150X600</span></div>
<svg style="left:53.5px;top:679.4px" width="8" height="11" viewBox="0 0 8 11"><path d="M1.500 0.800L6.200 5.300L1.500 9.800" fill="none" stroke="#8c8c8c" stroke-width="1.350"/></svg>
<svg style="left:71.1px;top:677.0px" width="18" height="14" viewBox="0 0 18 14" preserveAspectRatio="none"><use href="#ic_folder"/></svg>
<div class="t" style="left:95.1px;top:675.6px"><span class="fn" style="letter-spacing:-0.734px">SLC62X150</span></div>
<svg style="left:53.5px;top:703.4px" width="8" height="11" viewBox="0 0 8 11"><path d="M1.500 0.800L6.200 5.300L1.500 9.800" fill="none" stroke="#8c8c8c" stroke-width="1.350"/></svg>
<svg style="left:71.1px;top:701.0px" width="18" height="14" viewBox="0 0 18 14" preserveAspectRatio="none"><use href="#ic_folder"/></svg>
<div class="t" style="left:95.1px;top:699.6px"><span class="fn" style="letter-spacing:-0.734px">SLC62X200</span></div>
</div>
<div class="abs rp-bottom" style="left:1081px;top:774px;width:396px;height:2px;background:#fcfcfc"></div>
<!-- left black strip -->
<svg class="abs" style="left:0;top:0" width="12" height="780"><path d="M0 0H7.5C6 2 5 4 5 7V780H0Z" fill="#000"/></svg>
</div></body></html>
